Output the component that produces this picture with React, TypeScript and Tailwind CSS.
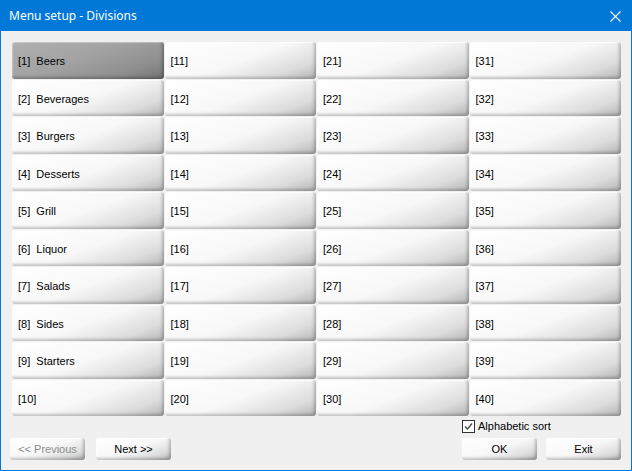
import React from "react";

const NAMES = ["Beers", "Beverages", "Burgers", "Desserts", "Grill", "Liquor", "Salads", "Sides", "Starters"];

const SHADE =
  "bg-[linear-gradient(160deg,#ffffff_0%,#f8f8f8_50%,#dcdcdc_80%,#b4b4b4_100%)] shadow-[inset_-2px_-2px_3px_rgba(0,0,0,0.22),inset_1px_1px_1px_rgba(255,255,255,0.95)]";
const SHADE_ON =
  "bg-[linear-gradient(160deg,#b0b0b0_0%,#a2a2a2_45%,#8e8e8e_78%,#727272_100%)] shadow-[inset_-2px_-2px_3px_rgba(0,0,0,0.25),inset_1px_1px_1px_rgba(255,255,255,0.35)]";

function label(n: number) {
  const name = n <= NAMES.length ? NAMES[n - 1] : "";
  return name ? `[${n}]  ${name}` : `[${n}]`;
}

function Cell({ n }: { n: number }) {
  const active = n === 1;
  return (
    <div
      className={`flex items-center whitespace-pre rounded-[3px] pl-[6px] pt-[2px] text-[11px] text-black ${
        active ? SHADE_ON : SHADE
      }`}
    >
      {label(n)}
    </div>
  );
}

function Btn({ children, disabled }: { children: React.ReactNode; disabled?: boolean }) {
  return (
    <div
      className={`flex h-[22px] w-[75px] items-center justify-center rounded-[3px] text-[11px] ${SHADE} ${
        disabled ? "text-[#8c8c8c]" : "text-black"
      }`}
    >
      {children}
    </div>
  );
}

export default function App() {
  // grid fills column by column: 1-10, 11-20, ...
  const cells: number[] = [];
  for (let r = 0; r < 10; r++) {
    for (let c = 0; c < 4; c++) cells.push(c * 10 + r + 1);
  }

  return (
    <div className="flex h-[471px] w-[632px] flex-col border border-[#0078d7] bg-[#f0f0f0] font-['Liberation_Sans',Arial,sans-serif]">
      <div className="flex h-[30px] shrink-0 items-center justify-between bg-[#0078d7] pl-[8px] pr-[10px] text-white">
        <span className="font-['Noto_Sans',sans-serif] text-[12px]">Menu setup - Divisions</span>
        <svg width="11" height="11" viewBox="0 0 11 11" className="mt-[1px]">
          <path d="M0.5 0.5 L10.5 10.5 M10.5 0.5 L0.5 10.5" stroke="white" strokeWidth="1.1" />
        </svg>
      </div>

      <div className="flex flex-1 flex-col pl-[11px] pr-[10px] pt-[11px]">
        <div className="grid h-[374px] grid-cols-4 grid-rows-10 gap-px">
          {cells.map((n) => (
            <Cell key={n} n={n} />
          ))}
        </div>

        <div className="-ml-[2px] flex items-end justify-between">
          <div className="flex gap-[11px]">
            <Btn disabled>&lt;&lt; Previous</Btn>
            <Btn>Next &gt;&gt;</Btn>
          </div>
          <div className="flex flex-col">
            <div className="mt-[4px] flex h-[13px] items-center gap-[3px] text-[11px] text-black">
              <span className="flex h-[13px] w-[13px] items-center justify-center border border-[#333333] bg-white">
                <svg width="9" height="9" viewBox="0 0 9 9">
                  <path d="M1 4.5 L3.5 7 L8 1.5" fill="none" stroke="#444" strokeWidth="1.3" />
                </svg>
              </span>
              Alphabetic sort
            </div>
            <div className="mt-[5px] flex gap-[9px]">
              <Btn>OK</Btn>
              <Btn>Exit</Btn>
            </div>
          </div>
        </div>
      </div>
    </div>
  );
}
